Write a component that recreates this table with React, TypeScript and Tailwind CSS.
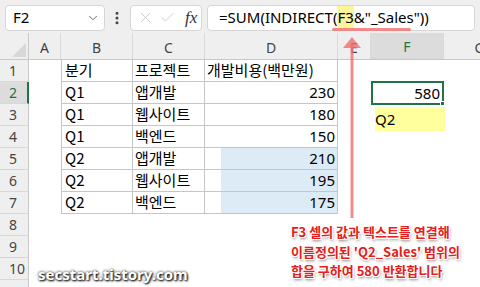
import { ChevronDown, EllipsisVertical, X, Check } from "lucide-react";

const colW = ["w-[29px]", "w-[32px]", "w-[72px]", "w-[72px]", "w-[133px]", "w-[33px]", "w-[73px]", "w-[72px]"];
const letters = ["", "A", "B", "C", "D", "E", "F", "G"];

const rows = [
  ["분기", "프로젝트", "개발비용(백만원)"],
  ["Q1", "앱개발", "230"],
  ["Q1", "웹사이트", "180"],
  ["Q1", "백엔드", "150"],
  ["Q2", "앱개발", "210"],
  ["Q2", "웹사이트", "195"],
  ["Q2", "백엔드", "175"],
];

const outline =
  "[text-shadow:1px_0_0_#fff,-1px_0_0_#fff,0_1px_0_#fff,0_-1px_0_#fff,1px_1px_0_#fff,-1px_-1px_0_#fff,1px_-1px_0_#fff,-1px_1px_0_#fff,1px_2px_3px_rgba(0,0,0,0.55)]";

export default function App() {
  return (
    <div className="relative h-[287px] w-[480px] overflow-hidden bg-white font-['Noto_Sans_CJK_KR','Noto_Sans',sans-serif] text-[15px] text-black">
      {/* formula bar */}
      <div className="flex h-[33px] items-center gap-[5px] bg-[#efefef] px-[5px] pt-[2px]">
        <div className="flex h-[26px] w-[100px] items-center justify-between rounded-[4px] border border-[#d6d6d6] bg-white pl-[7px] pr-[4px] font-['Noto_Sans',sans-serif]">
          <span>F2</span>
          <ChevronDown size={14} strokeWidth={1.5} className="text-[#555]" />
        </div>
        <EllipsisVertical size={16} strokeWidth={2.5} className="-ml-[1px] text-[#444]" />
        <div className="flex h-[26px] w-[72px] items-center gap-[5px] rounded-[4px] border border-[#d6d6d6] bg-white pl-[6px]">
          <X size={17} strokeWidth={1.2} className="text-[#c4c4c4]" />
          <Check size={17} strokeWidth={1.2} className="text-[#c4c4c4]" />
          <span className="ml-[4px] font-['Liberation_Serif',serif] text-[17px] italic text-[#333]">fx</span>
        </div>
        <div className="flex h-[26px] flex-1 items-center rounded-[4px] border border-[#d6d6d6] bg-white pl-[11px] font-['Noto_Sans',sans-serif] text-[15px]">
          <span>=SUM(INDIRECT(</span>
          <span className="bg-[#fcf59a]">F3</span>
          <span>&amp;"_Sales"))</span>
        </div>
      </div>

      {/* column headers */}
      <div className="flex h-[27px] border-b border-[#c8c8c8] bg-[#efefef]">
        {letters.map((l, i) => (
          <div
            key={i}
            className={`${colW[i]} flex shrink-0 items-center justify-center pt-[2px] text-[14px] text-[#444] font-['Noto_Sans',sans-serif] ${
              i === 6 ? "border-b-2 border-[#217346] bg-[#dcdcdc] text-[#217346]" : ""
            } ${i === 0 ? "border-r border-[#c8c8c8]" : "border-r border-[#dadada]"}`}
          >
            {i === 0 ? (
              <div className="ml-[10px] mt-[6px] h-0 w-0 border-b-[14px] border-l-[14px] border-b-[#d8d8d8] border-l-transparent" />
            ) : (
              l
            )}
          </div>
        ))}
      </div>

      {/* rows */}
      {Array.from({ length: 11 }).map((_, r) => {
        const data = rows[r];
        return (
          <div key={r} className="flex h-[22px]">
            <div
              className={`w-[29px] shrink-0 border-b border-[#d8d8d8] pl-[9px] text-[14px] leading-[22px] text-[#444] font-['Noto_Sans',sans-serif] ${
                r === 1 ? "border-r-2 border-r-[#217346] bg-[#dcdcdc] text-[#217346]" : "border-r border-r-[#c8c8c8] bg-[#efefef]"
              }`}
            >
              {r < 10 ? r + 1 : ""}
            </div>
            <div className="w-[32px] shrink-0" />
            {data ? (
              <>
                <div className="flex w-[72px] shrink-0 items-center border-b border-l border-r border-[#c6c6c6] pl-[3px]">
                  {data[0]}
                </div>
                <div className="flex w-[72px] shrink-0 items-center border-b border-r border-[#c6c6c6] pl-[2px]">
                  {data[1]}
                </div>
                <div className="flex w-[133px] shrink-0 border-b border-r border-[#c6c6c6]">
                  {r === 0 ? (
                    <span className="flex items-center pl-[2px]">{data[2]}</span>
                  ) : (
                    <div
                      className={`ml-[16px] flex flex-1 items-center justify-end pr-[2px] font-['Noto_Sans',sans-serif] ${
                        r >= 4 ? "bg-[#ddebf7]" : ""
                      }`}
                    >
                      {data[2]}
                    </div>
                  )}
                </div>
              </>
            ) : (
              <div className="w-[277px] shrink-0" />
            )}
            <div className="w-[33px] shrink-0" />
            <div className="relative w-[73px] shrink-0">
              {r === 1 && (
                <div className="absolute inset-x-0 -top-[1px] flex h-[24px] items-center justify-end border-2 border-[#217346] pr-[2px] font-['Noto_Sans',sans-serif]">
                  580
                  <div className="absolute -bottom-[3px] -right-[3px] h-[5px] w-[5px] border border-white bg-[#217346]" />
                </div>
              )}
              {r === 2 && (
                <div className="absolute left-[4px] top-[3px] flex h-[24px] w-[70px] items-center bg-[#ffff9e] font-['Noto_Sans',sans-serif]">
                  Q2
                </div>
              )}
            </div>
          </div>
        );
      })}

      {/* underline + arrow */}
      <div className="absolute left-[332px] top-[28px] h-[3px] w-[79px] rounded-full bg-[#f07878]/85" />
      <svg className="absolute left-[340px] top-[34px]" width="24" height="186" viewBox="0 0 24 186">
        <line x1="12" y1="10" x2="12" y2="184" stroke="#f07070" strokeOpacity="0.8" strokeWidth="3" />
        <polygon points="12,3 3,14 21,14" fill="#f07070" fillOpacity="0.8" />
      </svg>

      {/* annotation */}
      <div className={`absolute left-[291px] top-[222px] text-[13px] font-bold leading-[19.5px] text-[#e3201b] ${outline}`}>
        <div>F3 셀의 값과 텍스트를 연결해</div>
        <div>이름정의된 'Q2_Sales' 범위의</div>
        <div>합을 구하여 580 반환합니다</div>
      </div>

      {/* watermark */}
      <div className="absolute left-[38px] top-[263px] font-['Noto_Sans',sans-serif] text-[15px] font-bold text-white [text-shadow:1px_1px_2px_#000,0_0_3px_#222]">
        secstart.tistory.com
      </div>
    </div>
  );
}
